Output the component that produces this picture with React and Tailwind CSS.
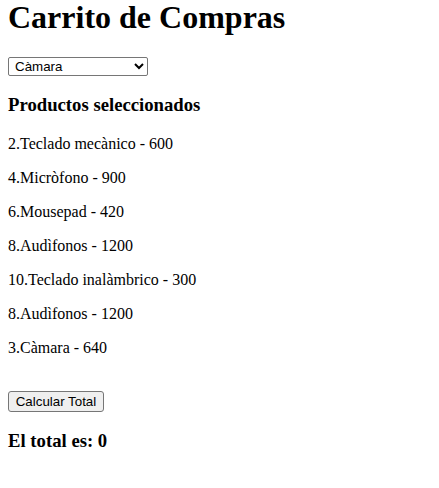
import { useState } from "react";

const productos = [
  "2.Teclado mecànico - 600",
  "4.Micròfono - 900",
  "6.Mousepad - 420",
  "8.Audìfonos - 1200",
  "10.Teclado inalàmbrico - 300",
  "8.Audìfonos - 1200",
  "3.Càmara - 640",
];

function App() {
  const [seleccion, setSeleccion] = useState("camara");

  return (
    <div className="min-h-screen bg-white px-2 text-black font-['Liberation_Serif',serif]">
      <h1 className="text-[32px] leading-[34px] font-bold">Carrito de Compras</h1>

      <select
        value={seleccion}
        onChange={(e) => setSeleccion(e.target.value)}
        className="mt-[23px] block h-[19px] w-[140px] rounded-[2px] border border-[#767676] bg-white pl-[2px] text-[13.33px] font-['Liberation_Sans',Arial,sans-serif]"
      >
        <option value="camara">Càmara</option>
        <option value="teclado">Teclado mecànico</option>
        <option value="microfono">Micròfono</option>
      </select>

      <h3 className="mt-[18px] text-[18.72px] leading-[21px] font-bold">Productos seleccionados</h3>

      <div className="mt-[20px] flex flex-col gap-4">
        {productos.map((p, i) => (
          <p key={i} className="text-base leading-[18px]">{p}</p>
        ))}
      </div>

      <button className="mt-[34px] block h-[21px] w-[96px] rounded-[3px] border border-[#767676] bg-[#efefef] px-[6px] text-[13.33px] leading-none font-['Liberation_Sans',Arial,sans-serif]">
        Calcular Total
      </button>

      <h3 className="mt-[18px] text-[18.72px] leading-[21px] font-bold">El total es: 0</h3>
    </div>
  );
}

export default App;
